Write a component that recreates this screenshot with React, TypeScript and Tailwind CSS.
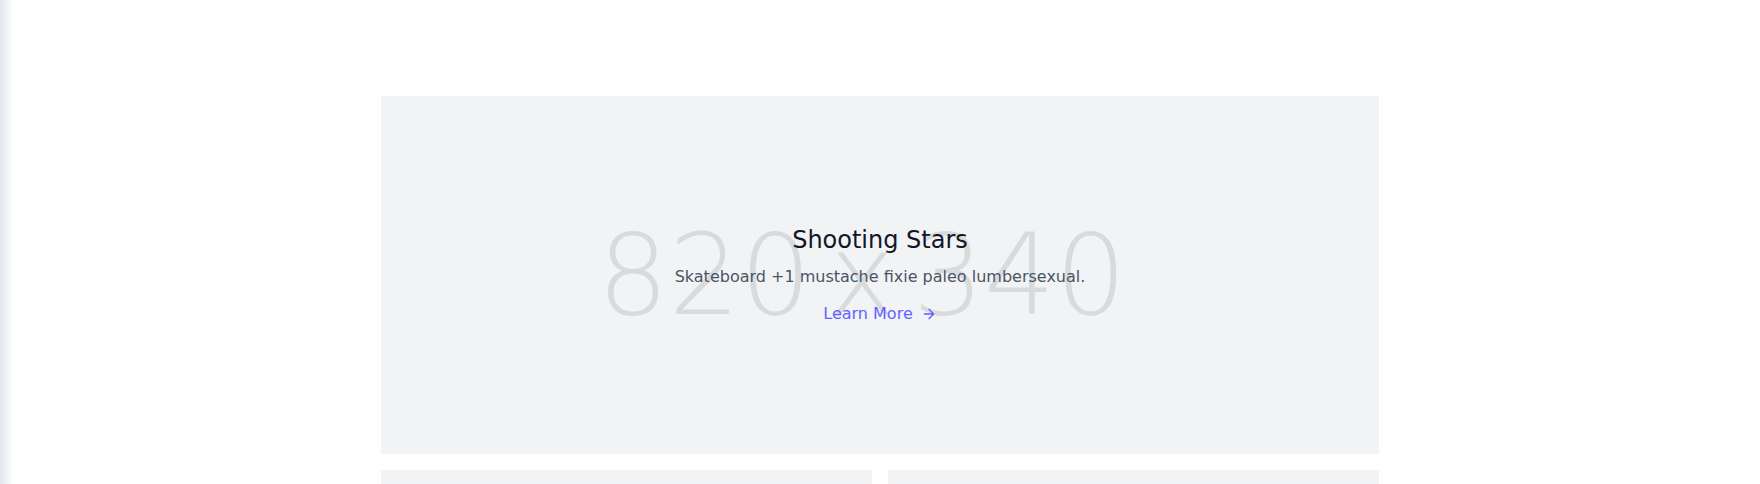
import type React from 'react';

const ArrowIcon: React.FC = () => (
  <svg
    fill="none"
    stroke="currentColor"
    strokeLinecap="round"
    strokeLinejoin="round"
    strokeWidth={2}
    className="w-4 h-4 ml-2"
    viewBox="0 0 24 24"
  >
    <path d="M5 12h14M12 5l7 7-7 7" />
  </svg>
);

interface TileProps {
  title: string;
  text: string;
  size?: string;
  big?: boolean;
}

const Tile: React.FC<TileProps> = ({ title, text, size, big }) => (
  <div
    className={`flex flex-wrap w-full bg-[#f2f3f5] relative overflow-hidden ${
      big ? 'py-32 px-10 mb-4' : 'py-24 px-10'
    }`}
  >
    {/* stands in for the dummy image */}
    {size && (
      <div className="absolute inset-0 flex items-center justify-center select-none">
        <span className="-ml-[36px] font-['DejaVu_Sans',sans-serif] font-extralight text-[112px] leading-none text-[#d9dadc] whitespace-nowrap [word-spacing:-18px]">
          {size}
        </span>
      </div>
    )}
    <div className="text-center relative z-10 w-full">
      <h2 className="text-2xl text-gray-900 font-medium mb-2">{title}</h2>
      <p className="leading-relaxed">{text}</p>
      <a className="mt-3 text-indigo-500 inline-flex items-center">
        Learn More
        <ArrowIcon />
      </a>
    </div>
  </div>
);

export default function App() {
  return (
    <section className="relative text-gray-600 bg-white font-['DejaVu_Sans',sans-serif] min-h-[484px]">
      <div className="fixed inset-y-0 left-0 w-[14px] bg-gradient-to-r from-[#e3e6ec] to-transparent pointer-events-none" />
      <div className="container px-5 py-24 mx-auto">
        <div className="lg:w-2/3 mx-auto">
          <Tile
            big
            title="Shooting Stars"
            text="Skateboard +1 mustache fixie paleo lumbersexual."
            size="820 x 340"
          />
          <div className="flex flex-wrap -mx-2">
            <div className="px-2 w-1/2">
              <Tile
                title="Shooting Stars"
                text="Skateboard +1 mustache fixie paleo lumbersexual."
              />
            </div>
            <div className="px-2 w-1/2">
              <Tile
                title="Shooting Stars"
                text="Skateboard +1 mustache fixie paleo lumbersexual."
              />
            </div>
          </div>
        </div>
      </div>
    </section>
  );
}
